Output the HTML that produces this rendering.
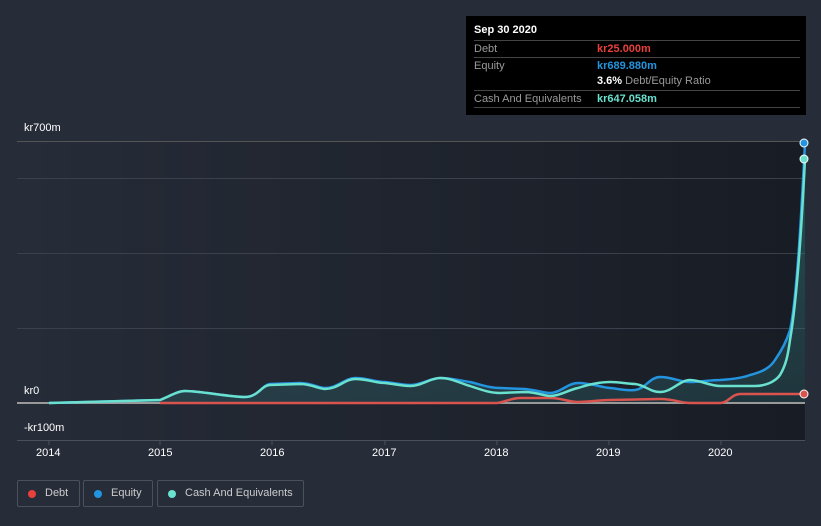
<!DOCTYPE html>
<html><head><meta charset="utf-8"><style>
body{margin:0;width:821px;height:526px;background:#262c38;font-family:"Liberation Sans",sans-serif;overflow:hidden;position:relative}
.t{position:absolute;color:#fff;font-size:11px}
.tip{position:absolute;left:466px;top:16px;width:340px;height:99px;background:#000}
.tip .r{position:absolute;left:8px;width:326px;font-size:11px;color:#9a9a9a;border-top:1px solid #444;height:16px;line-height:16px}
.tip .v{position:absolute;left:123px;font-weight:bold}
.lg{position:absolute;top:480px;height:27px;border:1px solid #4a505c;border-radius:2px;color:#ccc;font-size:11px;line-height:25px;box-sizing:border-box;padding-left:27px;white-space:nowrap}
.lg i{position:absolute;left:10px;top:9px;width:8px;height:8px;border-radius:50%}
</style></head><body>
<svg width="821" height="526" style="position:absolute;left:0;top:0">
<defs><linearGradient id="bg" x1="0" x2="1"><stop offset="0" stop-color="#262c38"/><stop offset="1" stop-color="#181c24"/></linearGradient>
<linearGradient id="ar" x1="0" y1="0" x2="0" y2="1"><stop offset="0" stop-color="#2f6e74" stop-opacity=".6"/><stop offset="1" stop-color="#2f6e74" stop-opacity=".3"/></linearGradient></defs>
<rect x="17" y="141" width="788" height="299" fill="url(#bg)"/>
<g stroke="#3a404c" stroke-width="1"><line x1="17" x2="805" y1="141.5" y2="141.5" stroke="#555"/><line x1="17" x2="805" y1="178.5" y2="178.5"/><line x1="17" x2="805" y1="253.5" y2="253.5"/><line x1="17" x2="805" y1="328.5" y2="328.5"/><line x1="17" x2="805" y1="440.5" y2="440.5" stroke="#4a505c"/></g>
<g stroke="#4a505c"><line x1="49" x2="49" y1="440" y2="445"/><line x1="160" x2="160" y1="440" y2="445"/><line x1="272" x2="272" y1="440" y2="445"/><line x1="385" x2="385" y1="440" y2="445"/><line x1="497" x2="497" y1="440" y2="445"/><line x1="609" x2="609" y1="440" y2="445"/><line x1="721" x2="721" y1="440" y2="445"/></g>
<path d="M49,403 L160,400 C170,396 178,391 185,391 C200,391 230,397 245,397 C258,397 262,385 270,384 L300,383 C312,383 318,388 325,388 C338,388 345,378 355,378 C368,378 375,382 385,382 C395,383 402,385 410,385 C422,385 430,378 440,378 C452,378 462,381 470,382 C482,385 490,388 500,388 L525,389 C535,390 545,393 550,393 C560,393 568,383 578,383 C590,383 600,387 610,388 C620,389 628,391 635,390 C645,389 650,377 660,377 C672,377 680,382 690,382 C700,382 710,380 720,380 C735,379 745,377 750,375 C762,372 770,368 775,360 C782,350 787,340 790,330 C797,300 802,200 805,143 L805,403 L49,403Z" fill="url(#ar)"/>
<line x1="17" x2="805" y1="403" y2="403" stroke="#999" stroke-width="2"/>
<path d="M160,403 L497,403 C505,402 512,398 520,398 L550,398 C562,398 568,402 578,402 C590,402 600,400 610,400 L660,399 C675,399 680,403 690,403 L720,403 C728,403 732,394 740,394 L805,394" fill="none" stroke="#d9534f" stroke-width="2.5"/>
<path d="M49,403 L160,400 C170,396 178,391 185,391 C200,391 230,397 245,397 C258,397 262,385 270,384 L300,383 C312,383 318,388 325,388 C338,388 345,378 355,378 C368,378 375,382 385,382 C395,383 402,385 410,385 C422,385 430,378 440,378 C452,378 462,381 470,382 C482,385 490,388 500,388 L525,389 C535,390 545,393 550,393 C560,393 568,383 578,383 C590,383 600,387 610,388 C620,389 628,391 635,390 C645,389 650,377 660,377 C672,377 680,382 690,382 C700,382 710,380 720,380 C735,379 745,377 750,375 C762,372 770,368 775,360 C782,350 787,340 790,330 C797,300 802,200 805,143" fill="none" stroke="#2394df" stroke-width="2.5"/>
<path d="M49,403 L160,400 C170,396 178,391 185,391 C200,391 230,397 245,397 C258,397 262,385 270,385 L300,384 C312,384 318,389 325,389 C338,389 345,379 355,379 C368,379 375,383 385,383 C395,384 402,386 410,386 C422,386 430,378 440,378 C452,378 462,384 470,386 C482,390 490,393 500,393 L525,392 C535,392 545,396 550,396 C560,396 568,390 578,388 C590,384 600,382 610,382 C620,382 628,384 635,384 C645,385 650,392 660,392 C672,392 680,380 690,380 C700,380 710,386 720,386 L755,386 C765,386 775,382 780,375 C786,365 788,355 790,340 C797,300 802,220 805,159" fill="none" stroke="#6ae0cf" stroke-width="2.5"/>
<circle cx="804" cy="143" r="4" fill="#2394df" stroke="#fff" stroke-width="1"/>
<circle cx="804" cy="159" r="4" fill="#6ae0cf" stroke="#fff" stroke-width="1"/>
<circle cx="804" cy="394" r="4" fill="#d9534f" stroke="#fff" stroke-width="1"/>
</svg>
<div class="t" style="left:24px;top:122px">kr700m</div>
<div class="t" style="left:24px;top:385px">kr0</div>
<div class="t" style="left:24px;top:422px">-kr100m</div>
<div class="t" style="left:36px;top:447px">2014</div>
<div class="t" style="left:148px;top:447px">2015</div>
<div class="t" style="left:260px;top:447px">2016</div>
<div class="t" style="left:372px;top:447px">2017</div>
<div class="t" style="left:484px;top:447px">2018</div>
<div class="t" style="left:596px;top:447px">2019</div>
<div class="t" style="left:708px;top:447px">2020</div>
<div class="tip">
<div style="position:absolute;left:8px;top:8px;color:#fff;font-weight:bold;font-size:11px">Sep 30 2020</div>
<div class="r" style="top:24px">Debt<span class="v" style="color:#e8403c">kr25.000m</span></div>
<div class="r" style="top:41px">Equity<span class="v" style="color:#2394df">kr689.880m</span></div>
<div class="r" style="top:57px;border-top:none"><span class="v" style="color:#fff">3.6% <span style="color:#9a9a9a;font-weight:normal">Debt/Equity Ratio</span></span></div>
<div class="r" style="top:74px;border-bottom:1px solid #444">Cash And Equivalents<span class="v" style="color:#6ae0cf">kr647.058m</span></div>
</div>
<div class="lg" style="left:17px;width:63px"><i style="background:#e8403c"></i>Debt</div>
<div class="lg" style="left:83px;width:70px"><i style="background:#2394df"></i>Equity</div>
<div class="lg" style="left:157px;width:147px"><i style="background:#6ae0cf"></i>Cash And Equivalents</div>
</body></html>
